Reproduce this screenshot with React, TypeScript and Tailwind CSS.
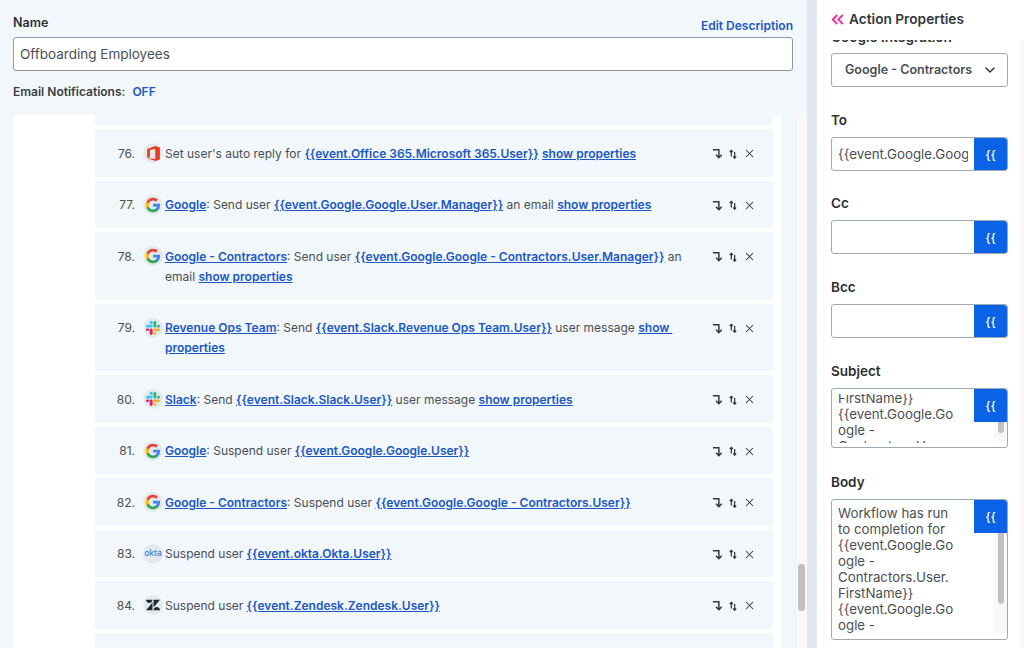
import React from 'react';
import { ChevronDown, ChevronsLeft, X } from 'lucide-react';

const GoogleLogo = () => (
  <svg viewBox="0 0 24 24" className="h-[16px] w-[16px]">
    <path fill="#4285F4" d="M22.56 12.25c0-.78-.07-1.53-.2-2.25H12v4.26h5.92c-.26 1.37-1.04 2.53-2.21 3.31v2.77h3.57c2.08-1.92 3.28-4.74 3.28-8.09z" />
    <path fill="#34A853" d="M12 23c2.97 0 5.46-.98 7.28-2.66l-3.57-2.77c-.98.66-2.23 1.06-3.71 1.06-2.86 0-5.29-1.93-6.16-4.53H2.18v2.84C3.99 20.53 7.7 23 12 23z" />
    <path fill="#FBBC05" d="M5.84 14.09c-.22-.66-.35-1.36-.35-2.09s.13-1.43.35-2.09V7.07H2.18C1.43 8.55 1 10.22 1 12s.43 3.45 1.18 4.93l2.85-2.22.81-.62z" />
    <path fill="#EA4335" d="M12 5.38c1.62 0 3.06.56 4.21 1.64l3.15-3.15C17.45 2.09 14.97 1 12 1 7.7 1 3.99 3.47 2.18 7.07l3.66 2.84c.87-2.6 3.3-4.53 6.16-4.53z" />
  </svg>
);

const SlackLogo = () => (
  <svg viewBox="0 0 24 24" className="h-[14px] w-[14px]">
    <path fill="#E01E5A" d="M5.042 15.165a2.528 2.528 0 0 1-2.52 2.523A2.528 2.528 0 0 1 0 15.165a2.527 2.527 0 0 1 2.522-2.52h2.52v2.52zM6.313 15.165a2.527 2.527 0 0 1 2.521-2.52 2.527 2.527 0 0 1 2.521 2.52v6.313A2.528 2.528 0 0 1 8.834 24a2.528 2.528 0 0 1-2.521-2.522v-6.313z" />
    <path fill="#36C5F0" d="M8.834 5.042a2.528 2.528 0 0 1-2.521-2.52A2.528 2.528 0 0 1 8.834 0a2.528 2.528 0 0 1 2.521 2.522v2.52H8.834zM8.834 6.313a2.528 2.528 0 0 1 2.521 2.521 2.528 2.528 0 0 1-2.521 2.521H2.522A2.528 2.528 0 0 1 0 8.834a2.528 2.528 0 0 1 2.522-2.521h6.312z" />
    <path fill="#2EB67D" d="M18.956 8.834a2.528 2.528 0 0 1 2.522-2.521A2.528 2.528 0 0 1 24 8.834a2.528 2.528 0 0 1-2.522 2.521h-2.522V8.834zM17.688 8.834a2.528 2.528 0 0 1-2.523 2.521 2.527 2.527 0 0 1-2.52-2.521V2.522A2.527 2.527 0 0 1 15.165 0a2.528 2.528 0 0 1 2.523 2.522v6.312z" />
    <path fill="#ECB22E" d="M15.165 18.956a2.528 2.528 0 0 1 2.523 2.522A2.528 2.528 0 0 1 15.165 24a2.527 2.527 0 0 1-2.52-2.522v-2.522h2.52zM15.165 17.688a2.527 2.527 0 0 1-2.52-2.523 2.526 2.526 0 0 1 2.52-2.52h6.313A2.527 2.527 0 0 1 24 15.165a2.528 2.528 0 0 1-2.522 2.523h-6.313z" />
  </svg>
);

const OfficeLogo = () => (
  <svg viewBox="0 0 24 24" className="h-[17px] w-[17px]">
    <path fill="#EB3C1F" d="M3 5.6 14.5 1.5 21 3.6v16.8l-6.5 2.1L3 18.4l11.5 1.5V5.5L7 7.2v9.6l-4 1.6z" />
  </svg>
);

const ZendeskLogo = () => (
  <svg viewBox="0 0 24 24" className="h-[14px] w-[14px]">
    <path fill="#1f2a30" d="M12.914 2.904V16.29L24 2.905H12.914zM0 2.906C0 5.966 2.483 8.45 5.543 8.45s5.542-2.484 5.543-5.544H0zm11.086 4.807L0 21.096h11.086V7.713zm7.37 7.84c-3.063 0-5.542 2.48-5.542 5.543H24c0-3.06-2.48-5.543-5.543-5.543z" />
  </svg>
);

const OktaLogo = () => <span className="text-[8.5px] leading-none font-medium text-[#2f86d6]">okta</span>;

const logos = {
  office: <OfficeLogo />,
  google: <GoogleLogo />,
  slack: <SlackLogo />,
  okta: <OktaLogo />,
  zendesk: <ZendeskLogo />,
};

type Step = {
  num: number;
  logo: keyof typeof logos;
  tall?: boolean;
  body: React.ReactNode;
};

const A = ({ children }: { children: React.ReactNode }) => (
  <a className="font-semibold text-[#1b58c4] underline">{children}</a>
);

const steps: Step[] = [
  { num: 76, logo: 'office', body: <>Set user's auto reply for <A>{'{{event.Office 365.Microsoft 365.User}}'}</A> <A>show properties</A></> },
  { num: 77, logo: 'google', body: <><A>Google</A>: Send user <A>{'{{event.Google.Google.User.Manager}}'}</A> an email <A>show properties</A></> },
  { num: 78, logo: 'google', tall: true, body: <><A>Google - Contractors</A>: Send user <A>{'{{event.Google.Google - Contractors.User.Manager}}'}</A> an<br />email <A>show properties</A></> },
  { num: 79, logo: 'slack', tall: true, body: <><A>Revenue Ops Team</A>: Send <A>{'{{event.Slack.Revenue Ops Team.User}}'}</A> user message <A>show&nbsp;</A><br /><A>properties</A></> },
  { num: 80, logo: 'slack', body: <><A>Slack</A>: Send <A>{'{{event.Slack.Slack.User}}'}</A> user message <A>show properties</A></> },
  { num: 81, logo: 'google', body: <><A>Google</A>: Suspend user <A>{'{{event.Google.Google.User}}'}</A></> },
  { num: 82, logo: 'google', body: <><A>Google - Contractors</A>: Suspend user <A>{'{{event.Google.Google - Contractors.User}}'}</A></> },
  { num: 83, logo: 'okta', body: <>Suspend user <A>{'{{event.okta.Okta.User}}'}</A></> },
  { num: 84, logo: 'zendesk', body: <>Suspend user <A>{'{{event.Zendesk.Zendesk.User}}'}</A></> },
];

const StepActions = () => (
  <div className="flex items-center text-[#33383d]">
    <svg viewBox="0 0 12 12" className="h-[11px] w-[11px]" fill="none" stroke="currentColor" strokeWidth="1.6">
      <path d="M1 2h6.5v8.5M4.4 7.4l3.1 3.2 3.1-3.2" />
    </svg>
    <svg viewBox="0 0 9 12" className="ml-[6px] h-[10px] w-[8px]" fill="none" stroke="currentColor" strokeWidth="1.5">
      <path d="M2.5 9V1.5M.6 3.6l1.9-2 1.9 2M6.5 3.5V11M4.7 9l1.8 2 1.8-2" />
    </svg>
    <X size={13} strokeWidth={1.9} className="ml-[6px]" />
  </div>
);

const StepRow = ({ step }: { step: Step }) => (
  <div className={`flex shrink-0 items-start bg-[#f2f7fb] pt-[14.5px] ${step.tall ? 'h-[67.5px]' : 'h-[47.5px]'}`}>
    <span className="w-[40px] text-right text-[12px] leading-[20px]">{step.num}.</span>
    <span className="mt-[-0.5px] ml-[8px] flex h-[20px] w-[20px] shrink-0 items-center justify-center rounded-full bg-[#e4e9ee]">
      {logos[step.logo]}
    </span>
    <p className="ml-[2px] w-[535px] text-[12px] leading-[20px]">{step.body}</p>
    <div className="flex h-[20px] items-center pl-[12px]">
      <StepActions />
    </div>
  </div>
);

const VarButton = () => (
  <button className="flex h-[33px] w-[33px] shrink-0 items-center justify-center rounded-tr-[3px] bg-[#0a62e6] text-[12px] font-medium text-white">
    {'{{'}
  </button>
);

const Field = ({ label, value, className }: { label: string; value?: string; className: string }) => (
  <div className={className}>
    <label className="block text-[13.5px] leading-[16px] font-semibold text-[#2b3035]">{label}</label>
    <div className="mt-[9px] flex h-[34px] w-[177px] overflow-hidden rounded-[3px] border border-[#a0a8b0] bg-white">
      <input
        readOnly
        value={value ?? ''}
        className="h-full min-w-0 flex-1 pr-[6px] pl-[6px] text-[13.3px] text-[#4a4f55] outline-none"
      />
      <VarButton />
    </div>
  </div>
);

const TextBox = ({ label, lines, height, offset, thumb, className }: {
  label: string;
  lines: string[];
  height: string;
  offset: string;
  thumb: string;
  className: string;
}) => (
  <div className={className}>
    <label className="block text-[13.5px] leading-[16px] font-semibold text-[#2b3035]">{label}</label>
    <div className={`mt-[9px] flex w-[177px] overflow-hidden rounded-[3px] border border-[#a0a8b0] bg-white ${height}`}>
      <div className="min-w-0 flex-1 pt-[5px] pb-[4px]">
        <div className="h-full overflow-hidden">
          <div className={`pl-[6px] text-[13.3px] leading-[16px] text-[#4a4f55] ${offset}`}>
            {lines.map((line, i) => <div key={i} className="whitespace-nowrap">{line}</div>)}
          </div>
        </div>
      </div>
      <div className="flex w-[33px] shrink-0 flex-col items-end">
        <VarButton />
        <div className="mb-[6px] flex w-[13px] flex-1 justify-center bg-[#f8f8f8]">
          <div className={`w-[6px] rounded-b-[3px] bg-[#c1c1c1] ${thumb}`} />
        </div>
      </div>
    </div>
  </div>
);

export default function App() {
  return (
    <div className="flex h-[648px] w-[1024px] overflow-hidden bg-white font-['Inter',sans-serif] text-[#4a4f55]">
      <main className="flex w-[807px] shrink-0 flex-col bg-[#f2f7fb]">
        <div className="h-[115px] shrink-0 pt-[16px] pr-[14px] pl-[13px]">
          <div className="flex items-start justify-between">
            <label className="text-[12.5px] leading-[14px] font-semibold text-[#2b3035]">Name</label>
            <a className="mt-[3px] -mb-[3px] text-[12px] leading-[14px] font-semibold text-[#1b58c4]">Edit Description</a>
          </div>
          <input
            readOnly
            value="Offboarding Employees"
            className="mt-[7px] h-[33.5px] w-full rounded-[3px] border border-[#8f98a1] bg-white px-[6px] text-[13.5px] text-[#4a4f55] outline-none"
          />
          <div className="mt-[14px] flex text-[12px] leading-[14px] font-semibold">
            <span className="text-[#3a3f44]">Email Notifications:</span>
            <a className="ml-[7px] text-[#1b58c4]">OFF</a>
          </div>
        </div>
        <div className="flex min-h-0 flex-1">
          <div className="ml-[13px] flex w-[768px] flex-col gap-[4px] overflow-hidden bg-white pr-[8px] pl-[82px]">
            <div className="h-[10px] shrink-0 bg-[#f2f7fb]" />
            {steps.map((step) => <StepRow key={step.num} step={step} />)}
            <div className="h-[47.5px] shrink-0 bg-[#f2f7fb]" />
          </div>
          <div className="w-[14px]" />
          <div className="w-[12px] border-l border-[#eef0f2] bg-[#f8f8f8] pt-[449px] pl-[2px]">
            <div className="h-[47px] w-[7px] rounded-[3px] bg-[#c1c1c1]" />
          </div>
        </div>
      </main>
      <div className="w-[10px] shrink-0 bg-[#e1e8ef]" />
      <aside className="flex min-w-0 flex-1 flex-col">
        <header className="flex h-[40px] shrink-0 items-center pb-[1px] pl-[11px]">
          <ChevronsLeft size={19} strokeWidth={2.4} className="text-[#ec2f9a]" />
          <h2 className="ml-[2px] text-[13.7px] font-semibold text-[#33383d]">Action Properties</h2>
        </header>
        <div className="flex min-h-0 flex-1 overflow-hidden">
          <div className="min-w-0 flex-1 overflow-hidden pl-[14px]">
            <div className="-mt-[11px] text-[13.5px] leading-[16px] font-semibold text-[#2b3035]">Google Integration</div>
            <div className="mt-[8px] flex h-[34px] w-[177px] items-center justify-between rounded-[3px] border border-[#a0a8b0] bg-white pr-[9px] pl-[13px]">
              <span className="text-[12.5px] font-semibold text-[#4a4f55]">Google - Contractors</span>
              <ChevronDown size={16} strokeWidth={2.2} className="text-[#33383d]" />
            </div>
            <Field label="To" value="{{event.Google.Google - Contractors.User.Manager}}" className="mt-[25px]" />
            <Field label="Cc" className="mt-[24px]" />
            <Field label="Bcc" className="mt-[25px]" />
            <TextBox
              label="Subject"
              className="mt-[25px]"
              height="h-[60px]"
              offset="-mt-[4px]"
              thumb="h-[11px]"
              lines={['FirstName}}', '{{event.Google.Go', 'ogle -', 'Contractors.User.']}
            />
            <TextBox
              label="Body"
              className="mt-[26px]"
              height="h-[141px]"
              offset="mt-0"
              thumb="h-[71px]"
              lines={['Workflow has run', 'to completion for', '{{event.Google.Go', 'ogle -', 'Contractors.User.', 'FirstName}}', '{{event.Google.Go', 'ogle -']}
            />
          </div>
          <div className="w-[3px] shrink-0 bg-[#f8f8f8]" />
        </div>
      </aside>
    </div>
  );
}
